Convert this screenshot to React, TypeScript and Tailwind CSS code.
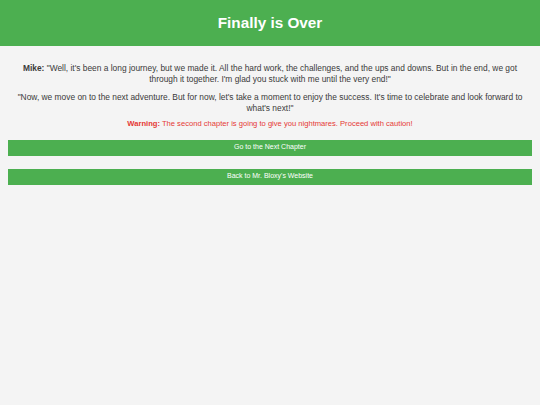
import React from "react";

export default function App() {
  return (
    <div className="min-h-[405px] w-full bg-[#f4f4f4] text-[#3a3a3a]" style={{ fontFamily: '"Liberation Sans", Arial, sans-serif' }}>
      <header className="flex h-[46px] items-center justify-center bg-[#4caf50]">
        <h1 className="text-[15.3px] font-bold leading-none text-white">Finally is Over</h1>
      </header>
      <main className="px-2 pt-[16.5px]">
        <div className="flex flex-col px-2 text-center text-[8.4px] leading-[11px]">
          <p>
            <strong>Mike:</strong> "Well, it's been a long journey, but we made it. All the hard work, the challenges, and the ups and downs. But in the end, we got through it together. I'm glad you stuck with me until the very end!"
          </p>
          <p className="mt-[7px]">
            "Now, we move on to the next adventure. But for now, let's take a moment to enjoy the success. It's time to celebrate and look forward to what's next!"
          </p>
          <p className="mt-[5px] text-[7.6px] leading-[10px] text-[#e53935]">
            <strong>Warning:</strong> The second chapter is going to give you nightmares. Proceed with caution!
          </p>
        </div>
        <div className="mt-[11px] flex flex-col gap-[13px]">
          <button className="h-[16px] w-full bg-[#4caf50] text-[7px] text-white">Go to the Next Chapter</button>
          <button className="h-[16px] w-full bg-[#4caf50] text-[7px] text-white">Back to Mr. Bloxy's Website</button>
        </div>
      </main>
    </div>
  );
}
